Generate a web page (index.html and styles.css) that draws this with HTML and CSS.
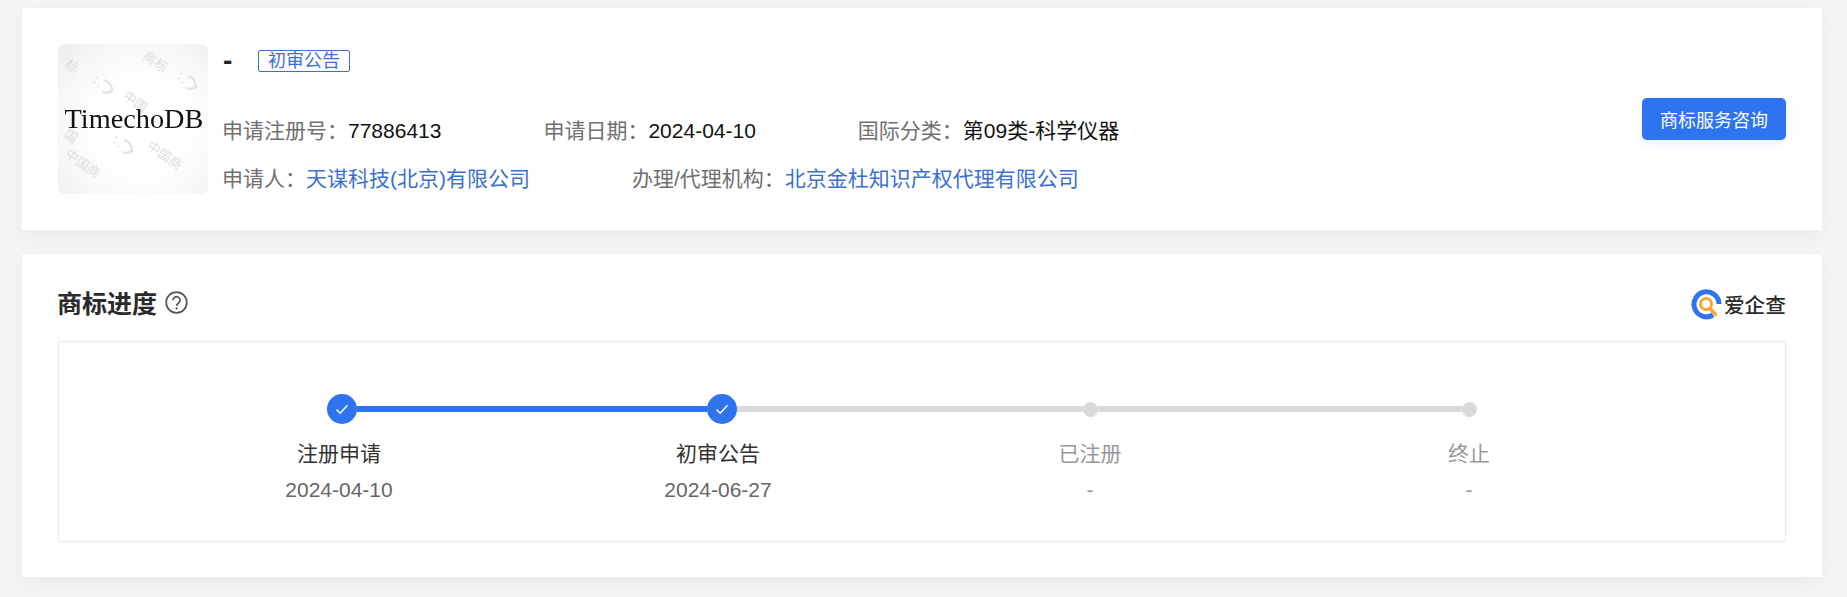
FILE: index.html
```html
<!DOCTYPE html>
<html lang="zh-CN">
<head>
    <meta charset="UTF-8">
    <title>商标详情</title>
    <link rel="stylesheet" href="styles.css">
</head>
<body>
    <section class="card head-card">
        <div class="tm-logo">
            <svg class="tm-mark" width="150" height="150" viewBox="0 0 150 150">
                <g class="tm-water">
                    <text transform="translate(6 22) rotate(35)">标</text>
                    <text transform="translate(84 14) rotate(35)">商标</text>
                    <text transform="translate(64 54) rotate(35)">中国</text>
                    <text transform="translate(5 92) rotate(35)">国</text>
                    <text transform="translate(6 112) rotate(35)">中国商</text>
                    <text transform="translate(88 104) rotate(35)">中国商</text>
                </g>
                <g class="tm-swirl">
                    <path d="M46 36q8 2 8 11q-5 3-9 1M36 38l1 1M40 42l1 1M38 33l1 1"/>
                    <path d="M130 32q8 2 8 11q-5 3-9 1M120 34l1 1M124 38l1 1M122 29l1 1"/>
                    <path d="M66 96q8 2 8 11q-5 3-9 1M56 98l1 1M60 102l1 1M58 93l1 1"/>
                </g>
            </svg>
            <span class="tm-name">TimechoDB</span>
        </div>
        <div class="head-info">
            <div class="head-title">
                <span class="tm-title">-</span>
                <span class="tag">初审公告</span>
            </div>
            <div class="info-row">
                <span class="info-item"><span class="info-key">申请注册号：</span>77886413</span>
                <span class="info-item"><span class="info-key">申请日期：</span>2024-04-10</span>
                <span class="info-item"><span class="info-key">国际分类：</span>第09类-科学仪器</span>
            </div>
            <div class="info-row">
                <span class="info-item"><span class="info-key">申请人：</span><a class="link">天谋科技(北京)有限公司</a></span>
                <span class="info-item"><span class="info-key">办理/代理机构：</span><a class="link">北京金杜知识产权代理有限公司</a></span>
            </div>
        </div>
        <button class="consult-btn">商标服务咨询</button>
    </section>

    <section class="card progress-card">
        <div class="progress-head">
            <h2 class="progress-title">商标进度</h2>
            <svg class="help-icon" width="23" height="23" viewBox="0 0 23 23">
                <circle cx="11.5" cy="11.5" r="10.3" fill="none" stroke="#555" stroke-width="1.7"/>
                <path d="M8 9.2a3.5 3.5 0 1 1 5.6 2.8c-1.3.9-2 1.4-2 3" fill="none" stroke="#555" stroke-width="1.7"/>
                <circle cx="11.6" cy="17.4" r="1.1" fill="#555"/>
            </svg>
            <div class="aqc-logo">
                <svg width="31" height="31" viewBox="0 0 31 31">
                    <path d="M22 26A12.5 12.5 0 1 1 28 15" fill="none" stroke="#2e73f0" stroke-width="5"/>
                    <circle cx="15" cy="15" r="5.5" fill="none" stroke="#f7a63c" stroke-width="3"/>
                    <path d="M19 19.5l5.5 6" stroke="#f7a63c" stroke-width="3.6" stroke-linecap="round"/>
                </svg>
                <span class="aqc-name">爱企查</span>
            </div>
        </div>
        <div class="progress-box">
            <div class="track">
                <span class="node done">
                    <svg width="16" height="16" viewBox="0 0 16 16"><path d="M2.5 8.5l3.7 3.7 7.3-8" fill="none" stroke="#fff" stroke-width="1.5"/></svg>
                </span>
                <span class="bar bar-one"></span>
                <span class="node done">
                    <svg width="16" height="16" viewBox="0 0 16 16"><path d="M2.5 8.5l3.7 3.7 7.3-8" fill="none" stroke="#fff" stroke-width="1.5"/></svg>
                </span>
                <span class="bar bar-two"></span>
                <span class="node todo"></span>
                <span class="bar bar-three"></span>
                <span class="node todo"></span>
            </div>
            <div class="steps">
                <div class="step">
                    <div class="step-name">注册申请</div>
                    <div class="step-date">2024-04-10</div>
                </div>
                <div class="step step-current">
                    <div class="step-name">初审公告</div>
                    <div class="step-date">2024-06-27</div>
                </div>
                <div class="step step-off">
                    <div class="step-name">已注册</div>
                    <div class="step-date">-</div>
                </div>
                <div class="step step-off">
                    <div class="step-name">终止</div>
                    <div class="step-date">-</div>
                </div>
            </div>
        </div>
    </section>
</body>
</html>
```

FILE: styles.css
```css
* {
    box-sizing: border-box;
}

html, body {
    margin: 0;
    padding: 0;
}

body {
    background-color: #f4f5f6;
    padding: 8px 25px 20px 22px;
    font-family: "Liberation Sans", "Noto Sans CJK SC", sans-serif;
    font-size: 21px;
    color: #111;
}

.card {
    background-color: #fff;
    box-shadow: 0 5px 18px rgba(40, 50, 60, 0.06);
    padding: 36px;
}

/* top card */
.head-card {
    display: flex;
    align-items: center;
    height: 222px;
    margin-bottom: 24px;
}

.tm-logo {
    position: relative;
    flex: none;
    display: flex;
    align-items: center;
    justify-content: center;
    width: 150px;
    height: 150px;
    padding-left: 2px;
    border-radius: 7px;
    overflow: hidden;
    background: radial-gradient(circle at 55% 55%, #fff 35%, #f8f8f8 70%, #ececec 100%);
}

.tm-mark {
    position: absolute;
    top: 0;
    left: 0;
    filter: blur(0.6px);
}

.tm-water text {
    font-size: 13px;
    fill: #dcdcdc;
}

.tm-swirl path {
    fill: none;
    stroke: #e2e2e2;
    stroke-width: 2.2;
}

.tm-name {
    position: relative;
    font-family: "Liberation Serif", serif;
    font-size: 28.3px;
    color: #111;
    filter: blur(0.35px);
}

.head-info {
    flex: 1;
    height: 150px;
    margin-left: 15px;
}

.head-title {
    display: flex;
    align-items: center;
    height: 34px;
    margin-bottom: 39px;
}

.tm-title {
    width: 35px;
    font-size: 28px;
    font-weight: bold;
    color: #222;
}

.tag {
    width: 92px;
    height: 22px;
    border: 1px solid #3a70d2;
    border-radius: 2px;
    font-size: 18px;
    line-height: 20px;
    text-align: center;
    color: #3a70d2;
}

.info-row {
    display: flex;
    gap: 102px;
    height: 28px;
    line-height: 28px;
    margin-bottom: 20px;
    margin-left: -1px;
    white-space: nowrap;
}

.info-key {
    color: #707070;
}

.link {
    color: #3a70d2;
}

.consult-btn {
    flex: none;
    width: 144px;
    height: 42px;
    border: none;
    border-radius: 5px;
    background-color: #2e73f0;
    box-shadow: 0 3px 8px rgba(46, 115, 240, 0.12);
    font-family: inherit;
    font-size: 18px;
    color: #fff;
}

/* progress card */
.progress-card {
    height: 323px;
    padding-top: 0;
}

.progress-head {
    display: flex;
    align-items: center;
    height: 87px;
    padding-top: 9px;
}

.progress-title {
    margin: 0 8px 0 -1px;
    font-size: 25px;
    font-weight: bold;
    color: #2b2b2b;
}

.help-icon {
    margin-top: 1px;
}

.aqc-logo {
    display: flex;
    align-items: center;
    gap: 2px;
    margin-top: 4px;
    margin-left: auto;
}

.aqc-name {
    width: 62px;
    font-size: 20.6px;
    font-weight: 500;
    white-space: nowrap;
    color: #2b2b2b;
}

.progress-box {
    height: 201px;
    border: 1px solid #e5ebf0;
    padding-top: 52px;
}

.track {
    display: flex;
    align-items: center;
    height: 30px;
    margin-left: 268px;
}

.node {
    flex: none;
    display: flex;
    align-items: center;
    justify-content: center;
    border-radius: 50%;
}

.node.done {
    width: 30px;
    height: 30px;
    background-color: #2e73f0;
}

.node.todo {
    width: 15px;
    height: 15px;
    background-color: #d9d9d9;
}

.bar {
    flex: none;
    height: 6px;
    background-color: #d9d9d9;
}

.bar-one {
    width: 350px;
    background-color: #2e73f0;
}

.bar-two {
    width: 346px;
}

.bar-three {
    width: 364px;
}

.steps {
    display: flex;
    margin-top: 16px;
    margin-left: 200px;
}

.step {
    width: 379px;
    text-align: center;
}

.step-name,
.step-date {
    width: 160px;
    line-height: 28px;
}

.step-current {
    width: 372px;
}

.step-name {
    margin-bottom: 8px;
    color: #333;
}

.step-date {
    color: #666;
}

.step-off .step-name,
.step-off .step-date {
    color: #999;
}
```
